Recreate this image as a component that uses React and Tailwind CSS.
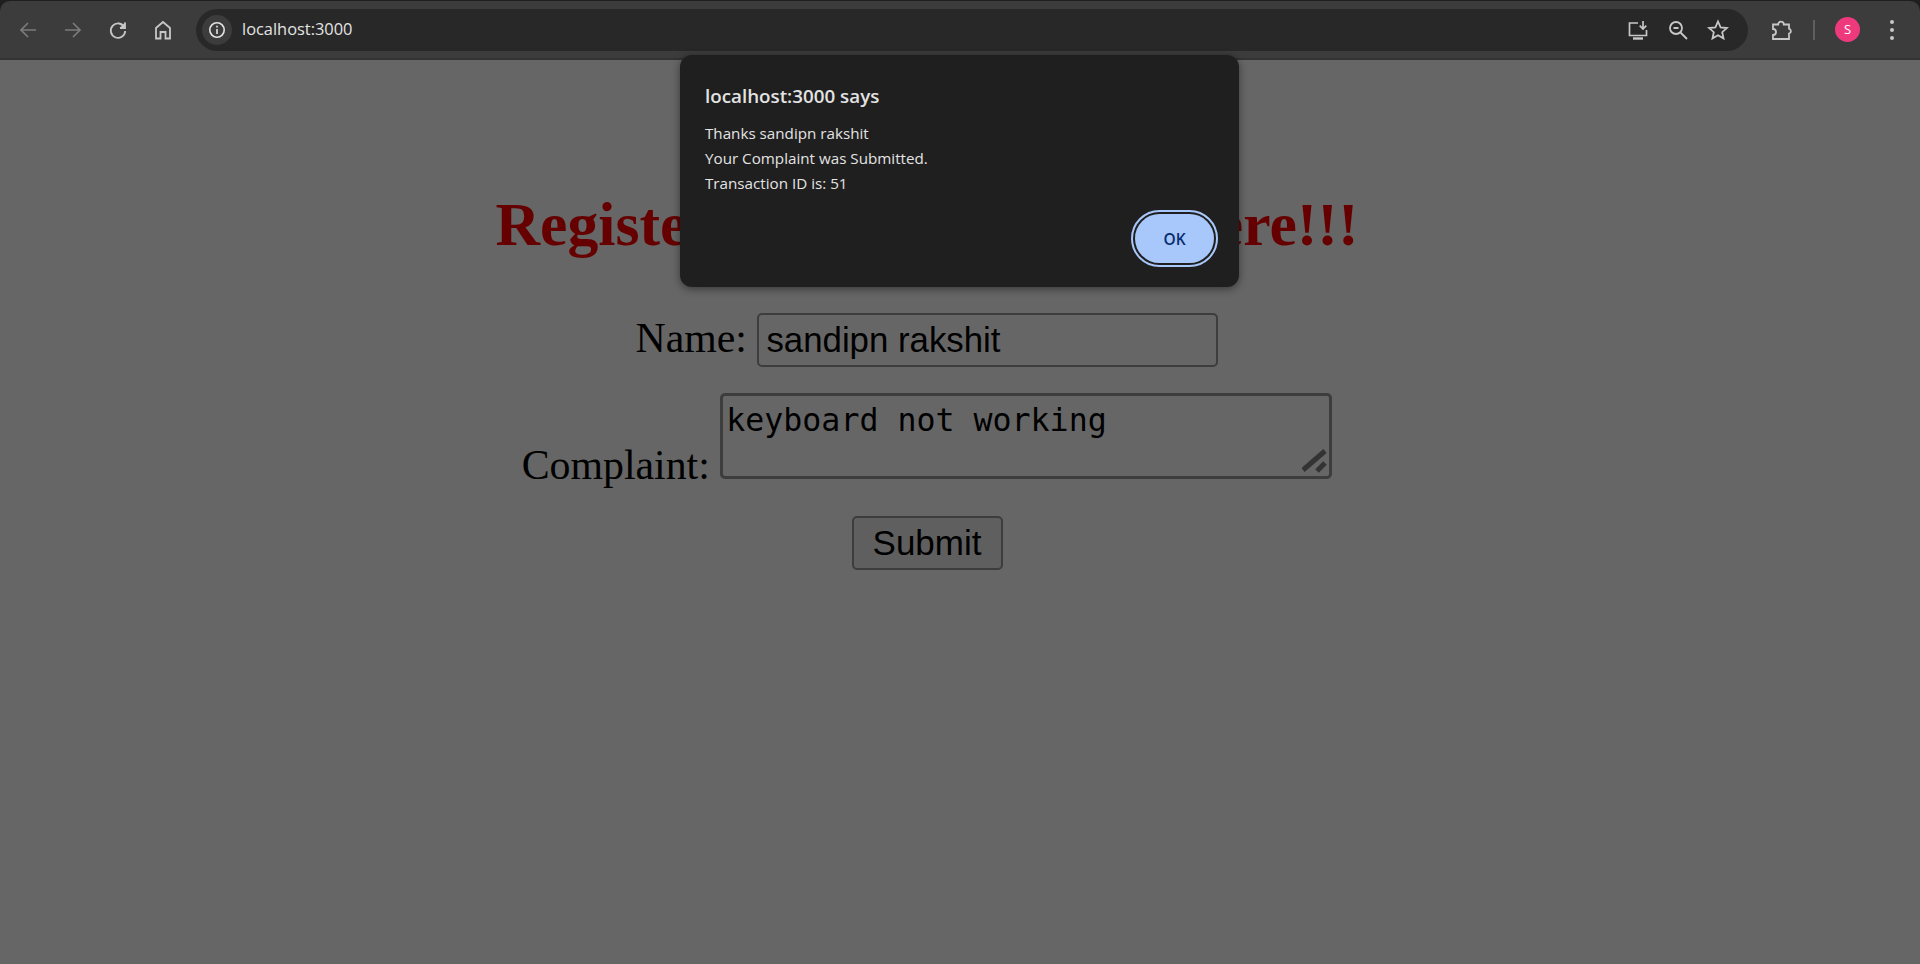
import React from "react";

const ArrowLeft = ({ color }) => (
  <svg width="24" height="24" viewBox="0 0 24 24" fill="none" stroke={color} strokeWidth="1.7">
    <path d="M20 12H5M12 5l-7 7 7 7" />
  </svg>
);

const ArrowRight = ({ color }) => (
  <svg width="24" height="24" viewBox="0 0 24 24" fill="none" stroke={color} strokeWidth="1.7">
    <path d="M4 12h15M12 5l7 7-7 7" />
  </svg>
);

function Toolbar() {
  return (
    <div className="h-[60px] bg-[#1f1f1f] pt-[1px]">
      <div className="h-[59px] bg-[#3c3c3c] rounded-t-[10px] border-b-[2px] border-[#333333] flex items-center pl-[16px] pr-[16px]">
        <div className="w-[24px] h-[24px] mr-[21px]"><ArrowLeft color="#7b7b7b" /></div>
        <div className="w-[24px] h-[24px] mr-[21px]"><ArrowRight color="#7b7b7b" /></div>
        <div className="w-[24px] h-[24px] mr-[21px]">
          <svg width="24" height="24" viewBox="0 0 24 24" fill="none" stroke="#c7c7c7" strokeWidth="1.8">
            <path d="M18.5 9.5A7.2 7.2 0 1 0 19.2 13" />
            <path d="M19 4.5v5.5h-5.5" fill="#c7c7c7" stroke="none" />
            <path d="M19 4.5v5.5h-5" />
          </svg>
        </div>
        <div className="w-[24px] h-[24px] mr-[21px]">
          <svg width="24" height="24" viewBox="0 0 24 24" fill="none" stroke="#c7c7c7" strokeWidth="1.8">
            <path d="M5 20.5V10l7-6 7 6v10.5h-4.5V14h-5v6.5z" />
          </svg>
        </div>
        <div className="h-[42px] w-[1552px] bg-[#282828] rounded-full flex items-center pl-[6px] pr-[18px]">
          <div className="w-[30px] h-[30px] rounded-full bg-[#3c3c3c] flex items-center justify-center">
            <svg width="18" height="18" viewBox="0 0 18 18" fill="none" stroke="#e3e3e3" strokeWidth="1.6">
              <circle cx="9" cy="9" r="7.2" />
              <path d="M9 8v5M9 4.8v1.8" />
            </svg>
          </div>
          <span className="ml-[10px] text-[16.4px] text-[#e3e3e3] font-['Open_Sans',sans-serif]">localhost:3000</span>
          <div className="ml-auto flex items-center gap-[16px]">
            <svg width="24" height="24" viewBox="0 0 24 24" fill="none" stroke="#c7c7c7" strokeWidth="1.7">
              <path d="M12 5H3.5v12.5h17V12" />
              <path d="M7 20.5h10" strokeWidth="2.4" />
              <path d="M17 3v8M13.7 7.7l3.3 3.3 3.3-3.3" />
            </svg>
            <svg width="24" height="24" viewBox="0 0 24 24" fill="none" stroke="#c7c7c7" strokeWidth="1.8">
              <circle cx="10" cy="10" r="6" />
              <path d="M14.5 14.5L21 21M7.5 10h5" />
            </svg>
            <svg width="24" height="24" viewBox="0 0 24 24" fill="none" stroke="#c7c7c7" strokeWidth="1.8">
              <path d="M12 3.5l2.6 5.8 6.3.7-4.7 4.2 1.3 6.2-5.5-3.2-5.5 3.2 1.3-6.2L3.1 10l6.3-.7z" />
            </svg>
          </div>
        </div>
        <div className="ml-[21px] w-[24px] h-[24px]">
          <svg width="24" height="24" viewBox="0 0 24 24" fill="none" stroke="#c7c7c7" strokeWidth="1.8">
            <path d="M4 6.5h5.2a2.8 2.8 0 0 1 5.6 0H20v4.2a2.6 2.6 0 0 1 0 5V21H4v-4a3 3 0 0 0 0-6z" />
          </svg>
        </div>
        <div className="ml-[20px] w-[2px] h-[20px] bg-[#5f5f5f]"></div>
        <div className="ml-[20px] w-[25px] h-[25px] rounded-full bg-[#ee3a7c] flex items-center justify-center text-white text-[13px] font-['Open_Sans',sans-serif]">
          S
        </div>
        <div className="ml-[30px] w-[4px] flex flex-col gap-[4px]">
          <div className="w-[4px] h-[4px] rounded-full bg-[#c7c7c7]"></div>
          <div className="w-[4px] h-[4px] rounded-full bg-[#c7c7c7]"></div>
          <div className="w-[4px] h-[4px] rounded-full bg-[#c7c7c7]"></div>
        </div>
      </div>
    </div>
  );
}

function AlertDialog() {
  return (
    <div className="absolute left-[680px] top-[55px] w-[559px] h-[232px] bg-[#1f1f1f] rounded-[12px] shadow-[0_2px_8px_rgba(0,0,0,0.45)] pl-[25px] pr-[21px] font-['Open_Sans',sans-serif]">
      <div className="pt-[29px] text-[18.8px] leading-[24px] font-semibold text-[#e3e3e3]">
        localhost:3000 says
      </div>
      <div className="mt-[13px] text-[15.2px] leading-[25px] text-[#e3e3e3]">
        <div>Thanks sandipn rakshit</div>
        <div>Your Complaint was Submitted.</div>
        <div>Transaction ID is: 51</div>
      </div>
      <div className="absolute right-[21px] bottom-[20px] w-[87px] h-[57px] rounded-full border-[2px] border-[#a8c7fa] p-[2px]">
        <div className="w-full h-full pt-[2px] rounded-full bg-[#a8c7fa] flex items-center justify-center text-[15.5px] text-[#062e6f] font-semibold">
          OK
        </div>
      </div>
    </div>
  );
}

export default function App() {
  return (
    <div className="relative h-[964px] overflow-hidden bg-[#666666] font-['Liberation_Serif',serif] text-black">
      <Toolbar />

      <div className="pr-[66px] text-center">
        <h1 className="mt-[127px] text-[61.7px] leading-[74px] font-bold text-[#660000]">
          Register Your Complaint Here!!!
        </h1>

        <div className="mt-[50px] text-[41.8px] leading-[54px]">
          <label>Name: </label>
          <input
            readOnly
            value="sandipn rakshit"
            className="w-[461px] h-[54px] align-baseline px-[7px] bg-transparent border-[2px] border-[#3d3d3d] rounded-[5px] text-[34.8px] text-black font-['Liberation_Sans',sans-serif] outline-none"
          />
        </div>

        <div className="mt-[26px] text-[41.8px]">
          <label>Complaint: </label>
          <textarea
            readOnly
            value="keyboard not working"
            className="w-[612px] h-[86px] px-[3px] py-[1px] bg-transparent border-[3px] border-[#3d3d3d] rounded-[5px] text-[31.6px] leading-[46px] text-black font-['DejaVu_Sans_Mono',monospace] outline-none resize-none"
          />
        </div>

        <div className="mt-[19px]">
          <button className="w-[151px] h-[54px] bg-[#5f5f5f] border-[2px] border-[#3d3d3d] rounded-[5px] text-[35px] leading-[40px] text-black font-['Liberation_Sans',sans-serif]">
            Submit
          </button>
        </div>
      </div>

      {/* textarea resize grip */}
      <svg className="absolute left-[1302px] top-[449px]" width="30" height="28" viewBox="0 0 30 28" fill="none" stroke="#333333" strokeWidth="5">
        <path d="M1 21L23 2M15 22l8-8" />
      </svg>

      <AlertDialog />
    </div>
  );
}
